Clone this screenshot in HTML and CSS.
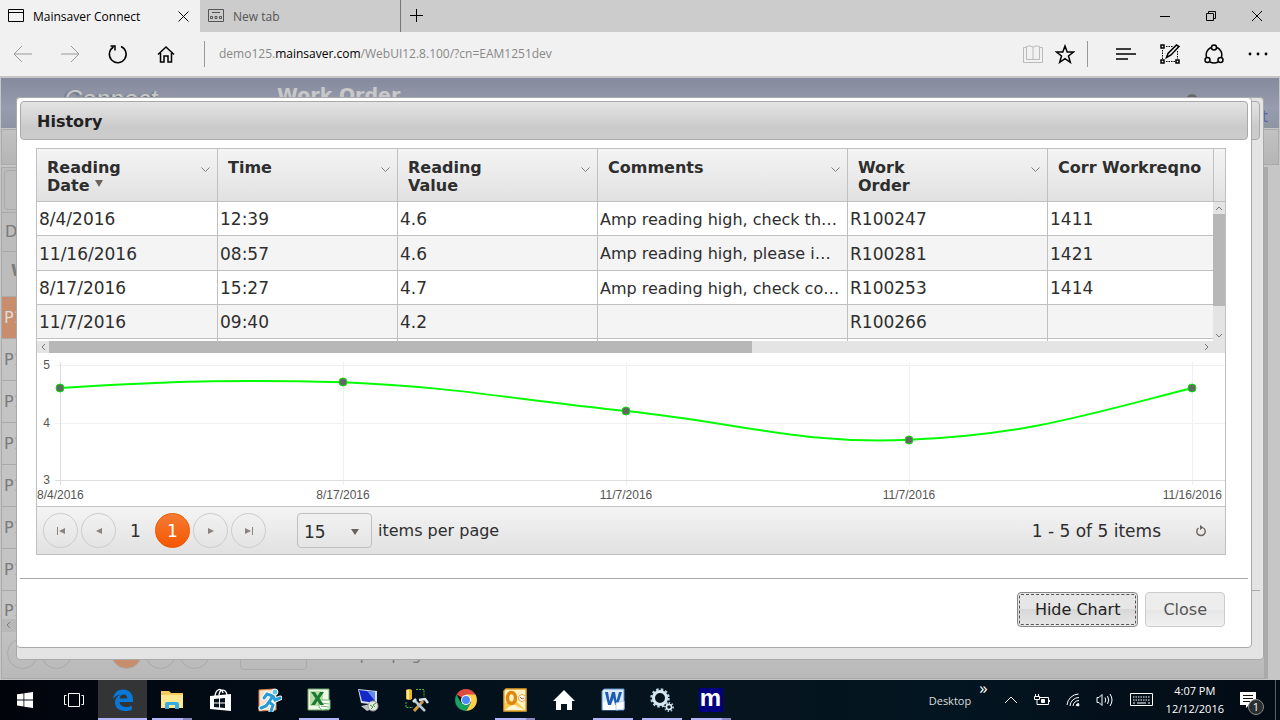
FILE: index.html
```
<!DOCTYPE html>
<html lang="en">
<head>
    <meta charset="UTF-8">
    <meta name="viewport" content="width=device-width, initial-scale=1.0">
    <title>Mainsaver Connect</title>
    <link rel="stylesheet" href="styles.css">
</head>
<body>
    <!-- Browser tabs -->
    <div class="tab-strip">
        <div class="tab active">
            <svg width="16" height="16" viewBox="0 0 16 16"><path d="M.5 1.500h15v12H.5zM.5 4.500h15" class="line"/></svg>
            <span>Mainsaver Connect</span>
            <button class="tab-close" aria-label="Close tab"><svg width="11" height="11" viewBox="0 0 11 11"><path d="M.5.5l10 10M10.500.5l-10 10" class="line"/></svg></button>
        </div>
        <div class="tab">
            <svg width="16" height="16" viewBox="0 0 16 16"><path d="M.5 1.500h15v12H.5zM4 4.500h8M2.500 8.500h2v2h-2zM7 8.500h2v2H7zM11.500 8.500h2v2h-2z" class="line"/></svg>
            <span>New tab</span>
        </div>
        <button class="tab-new" aria-label="New tab"><svg width="14" height="14" viewBox="0 0 14 14"><path d="M0 6.500h13M6.500 0v13" class="line"/></svg></button>
        <div class="window-buttons">
            <button aria-label="Minimize"><svg width="12" height="12" viewBox="0 0 12 12"><path d="M1 6.500h10" class="line"/></svg></button>
            <button aria-label="Restore"><svg width="12" height="12" viewBox="0 0 12 12"><path d="M1.500 3.500h7v7h-7zM3.500 3.500v-2h7v7h-2" class="line"/></svg></button>
            <button aria-label="Close"><svg width="12" height="12" viewBox="0 0 12 12"><path d="M1 1l10 10M11 1L1 11" class="line"/></svg></button>
        </div>
    </div>

    <!-- Address bar -->
    <div class="toolbar">
        <button class="faded" aria-label="Back"><svg width="20" height="18" viewBox="0 0 20 18"><path d="M19 9H1M9 1L1 9l8 8" class="line"/></svg></button>
        <button class="faded" aria-label="Forward"><svg width="20" height="18" viewBox="0 0 20 18"><path d="M1 9h18M11 1l8 8-8 8" class="line"/></svg></button>
        <button aria-label="Refresh"><svg width="20" height="20" viewBox="0 0 20 20"><path d="M13 2.500A8.400 8.400 0 1 1 5.500 3M2.500 2h4.500v4.500" class="line bold"/></svg></button>
        <button aria-label="Home"><svg width="18" height="18" viewBox="0 0 18 18"><path d="M1 9.500L9 2l8 7.500M3.500 8v9H7v-6h4v6h3.500V8" class="line bold"/></svg></button>
        <div class="address">demo125.<b>mainsaver.com</b>/WebUI12.8.100/?cn=EAM1251dev</div>
        <div class="address-icons">
            <svg class="reading" width="20" height="20" viewBox="0 0 20 20"><path d="M3 3.500H.5v15h19v-15H17M10 3v13M10 3Q7 1 3.500 2.500V15.500H10h6.500V2.500Q13 1 10 3" class="line"/></svg>
            <svg width="20" height="20" viewBox="0 0 20 20"><path d="M10 2l2.200 6H18.500l-5 4 1.800 6.300L10 14.600l-5.300 3.700L6.500 12l-5-4h6.300z" class="line bold"/></svg>
        </div>
        <div class="hub-icons">
            <button aria-label="Hub"><svg width="20" height="14" viewBox="0 0 20 14"><path d="M0 2h15M0 7h20M0 12h12" class="line bold"/></svg></button>
            <button aria-label="Web note"><svg width="20" height="20" viewBox="0 0 20 20"><path d="M1 1h3v3H1zM1 16h3v3H1zM16 16h3v3h-3z" class="line bold"/><path d="M6 2.500h7M2.500 6v9M6 17.500h9M17.500 7v8" class="line" stroke-dasharray="1.500 1"/><path d="M6.500 13.500l1.500-4L16.500 1l2.500 1.500-8 8.500z" class="line bold"/></svg></button>
            <button aria-label="Share"><svg width="20" height="20" viewBox="0 0 20 20"><path d="M7 3.500A8 8 0 0 0 2.500 13M13 3.500A8 8 0 0 1 17.500 13M6 18q4 2 8 0" class="line bold"/><circle cx="10" cy="3.500" r="2.500" class="line bold"/><circle cx="3.500" cy="16" r="2.500" class="line bold"/><circle cx="16.500" cy="16" r="2.500" class="line bold"/></svg></button>
            <button aria-label="More"><svg width="20" height="4" viewBox="0 0 20 4"><circle cx="2" cy="2" r="1.400"/><circle cx="10" cy="2" r="1.400"/><circle cx="18" cy="2" r="1.400"/></svg></button>
        </div>
    </div>

    <main class="page">
        <!-- Work order screen under the overlay -->
        <div class="work-order">
            <div class="banner">
                <span class="brand">Connect</span>
                <span class="screen-title">Work Order</span>
                <svg class="user" width="12" height="12" viewBox="0 0 12 12"><circle cx="6" cy="6" r="6"/></svg>
                <a class="logout" href="#">Logout</a>
            </div>
            <div class="menu-bar"></div>
            <div class="wo-grid">
                <div class="wo-tools"><div class="wo-box"></div></div>
                <div class="wo-group">D</div>
                <div class="wo-head">W</div>
                <div class="wo-row selected">P1</div>
                <div class="wo-row">P1</div>
                <div class="wo-row">P1</div>
                <div class="wo-row">P1</div>
                <div class="wo-row">P1</div>
                <div class="wo-row">P1</div>
                <div class="wo-row">P1</div>
                <div class="wo-row short">P1</div>
                <div class="wo-scroll"><svg width="5" height="8" viewBox="0 0 5 8"><path d="M4 1L1 4l3 3" class="line"/></svg></div>
                <div class="wo-pager">
                    <i></i><i></i><i class="current"></i><i></i><i></i>
                    <div class="wo-size"></div>
                    <span>items per page</span>
                </div>
            </div>
        </div>

        <div class="dialog back">
            <div class="dialog-title"></div>
            <div class="dialog-rule"></div>
        </div>

        <!-- History dialog -->
        <section class="dialog front">
            <h1 class="dialog-title">History</h1>
            <div class="dialog-body">
                <div class="grid">
                    <div class="grid-main">
                        <div class="grid-view">
                            <table>
                                <colgroup>
                                    <col class="col-date"><col class="col-time"><col class="col-mid"><col class="col-wide"><col class="col-mid"><col class="col-mid">
                                </colgroup>
                                <thead>
                                    <tr>
                                        <th>Reading Date <svg class="sort" width="8" height="7" viewBox="0 0 8 7"><path d="M0 0h8L4 7z"/></svg><svg class="chev" width="9" height="6" viewBox="0 0 9 6"><path d="M.5.5l4 4 4-4" class="line"/></svg></th>
                                        <th>Time<svg class="chev" width="9" height="6" viewBox="0 0 9 6"><path d="M.5.5l4 4 4-4" class="line"/></svg></th>
                                        <th>Reading Value<svg class="chev" width="9" height="6" viewBox="0 0 9 6"><path d="M.5.5l4 4 4-4" class="line"/></svg></th>
                                        <th>Comments<svg class="chev" width="9" height="6" viewBox="0 0 9 6"><path d="M.5.5l4 4 4-4" class="line"/></svg></th>
                                        <th class="narrow">Work Order<svg class="chev" width="9" height="6" viewBox="0 0 9 6"><path d="M.5.5l4 4 4-4" class="line"/></svg></th>
                                        <th class="nowrap">Corr Workreqno</th>
                                    </tr>
                                </thead>
                                <tbody>
                                    <tr><td>8/4/2016</td><td>12:39</td><td>4.6</td><td class="comment">Amp reading high, check th…</td><td>R100247</td><td>1411</td></tr>
                                    <tr><td>11/16/2016</td><td>08:57</td><td>4.6</td><td class="comment">Amp reading high, please i…</td><td>R100281</td><td>1421</td></tr>
                                    <tr><td>8/17/2016</td><td>15:27</td><td>4.7</td><td class="comment">Amp reading high, check co…</td><td>R100253</td><td>1414</td></tr>
                                    <tr><td>11/7/2016</td><td>09:40</td><td>4.2</td><td></td><td>R100266</td><td></td></tr>
                                    <tr><td></td><td></td><td></td><td></td><td></td><td></td></tr>
                                </tbody>
                            </table>
                        </div>
                        <div class="grid-side">
                            <div class="side-head"></div>
                            <div class="v-scroll">
                                <svg width="8" height="12" viewBox="0 0 8 12"><path d="M1 8l3-3 3 3" class="line"/></svg>
                                <div class="v-thumb"></div>
                                <svg width="8" height="12" viewBox="0 0 8 12"><path d="M1 5l3 3 3-3" class="line"/></svg>
                            </div>
                        </div>
                    </div>
                    <div class="h-scroll">
                        <svg width="12" height="12" viewBox="0 0 12 12"><path d="M8 3L5 6l3 3" class="line"/></svg>
                        <div class="h-track"><div class="h-thumb"></div></div>
                        <svg width="12" height="12" viewBox="0 0 12 12"><path d="M4 3l3 3-3 3" class="line"/></svg>
                    </div>

                    <svg class="chart" viewBox="0 0 1188 153">
                        <path class="gridline" d="M18 12.500h1170M18 70.500h1170M306.500 9v123M589.500 9v123M872.500 9v123M1155.500 9v123"/>
                        <path class="axis" d="M18 127.500h1170M23.500 9v123"/>
                        <path class="series" d="M23 35C136 28 193 26.500 306 29.200C419 33.800 476 46.500 589 58C702 69.500 759 91.400 872 86.800C985 82.200 1042 64 1155 35"/>
                        <g class="dots">
                            <circle cx="23" cy="35" r="4"/><circle cx="306" cy="29" r="4"/><circle cx="589" cy="58" r="4"/><circle cx="872" cy="87" r="4"/><circle cx="1155" cy="35" r="4"/>
                        </g>
                        <g class="labels">
                            <text x="13" y="16" text-anchor="end">5</text>
                            <text x="13" y="74" text-anchor="end">4</text>
                            <text x="13" y="131" text-anchor="end">3</text>
                            <text x="0" y="146">8/4/2016</text>
                            <text x="306" y="146" text-anchor="middle">8/17/2016</text>
                            <text x="589" y="146" text-anchor="middle">11/7/2016</text>
                            <text x="872" y="146" text-anchor="middle">11/7/2016</text>
                            <text x="1185" y="146" text-anchor="end">11/16/2016</text>
                        </g>
                    </svg>

                    <div class="pager">
                        <button aria-label="First page"><svg width="8" height="8" viewBox="0 0 8 8"><path d="M0 0h1v8H0zM8 1v6L2 4z"/></svg></button>
                        <button aria-label="Previous page"><svg width="8" height="8" viewBox="0 0 8 8"><path d="M7 1v6L1 4z"/></svg></button>
                        <span class="page-number">1</span>
                        <button class="current">1</button>
                        <button aria-label="Next page"><svg width="8" height="8" viewBox="0 0 8 8"><path d="M1 1v6l6-3z"/></svg></button>
                        <button aria-label="Last page"><svg width="8" height="8" viewBox="0 0 8 8"><path d="M7 0h1v8H7zM0 1v6l6-3z"/></svg></button>
                        <div class="size-box">
                            <select id="page-size"><option>15</option><option>30</option></select>
                            <svg width="8" height="6" viewBox="0 0 8 6"><path d="M0 0h8L4 6z"/></svg>
                        </div>
                        <label for="page-size">items per page</label>
                        <span class="pager-info">1 - 5 of 5 items</span>
                        <button class="reload" aria-label="Refresh grid"><svg width="12" height="12" viewBox="0 0 12 12"><path d="M3.500 3A4.200 4.200 0 1 0 8.500 3" fill="none" stroke="#6b625d" stroke-width="1.400"/><path d="M5 0v5l3.500-2.500z"/></svg></button>
                    </div>
                </div>
            </div>
            <div class="dialog-footer">
                <button class="btn focused">Hide Chart</button>
                <button class="btn">Close</button>
            </div>
        </section>
    </main>

    <!-- Taskbar -->
    <footer class="taskbar">
        <button class="task" aria-label="Start"><svg width="16" height="16" viewBox="0 0 16 16" fill="#fff"><path d="M0 2.300l6.500-.9v6.100H0zM7.300 1.300L16 0v7.500H7.300zM0 8.400h6.500v6.100L0 13.600zM7.300 8.400H16V16l-8.700-1.300z"/></svg></button>
        <button class="task" aria-label="Task view"><svg width="20" height="16" viewBox="0 0 20 16" class="light"><path d="M4.500 1.500h11v13h-11zM2.500 3.500h-2v9h2M17.500 3.500h2v9h-2"/></svg></button>
        <button class="task open active" aria-label="Edge"><svg width="22" height="24" viewBox="0 0 22 24"><path d="M1 11C2 4.500 6 1.500 11 1.500c6.500 0 10 4.500 10 10V14H7.500c.3 3.500 3.500 5 6.500 5 2.200 0 4-.5 5.800-1.500v4.200C17.800 22.800 15.500 23 13 23 6.500 23 3 19 3 14.500c0-3.500 2-6.500 5.500-8C5.500 7 3 8.500 1 11zM7.600 10.500h7.600c0-2.500-1.300-4-3.600-4s-3.700 1.600-4 4z" fill="#0878d7" fill-rule="evenodd"/></svg></button>
        <button class="task open multi" aria-label="File Explorer"><svg width="24" height="22" viewBox="0 0 24 22"><path d="M1 2h8l2 2h12v15H1z" fill="#f5c95a"/><path d="M1 6h22v13H1z" fill="#fde793"/><path d="M5 20v-5q0-2 2-2h10q2 0 2 2v5h-4v-4H9v4z" fill="#35ade2"/></svg></button>
        <button class="task" aria-label="Store"><svg width="22" height="24" viewBox="0 0 22 24"><path d="M5 8c1-8 7-8 8-3M9 7c1-7 7-6 8 0" fill="none" stroke="#fff" stroke-width="1.400"/><path d="M0 8l21-2v17L0 21z" fill="#fff"/><path d="M4 11l5-.5v4H4zM10 10.400l5-.4v4.500h-5zM4 15.500h5v4l-5-.4zM10 15.500h5V20l-5-.4z" fill="#07111b"/></svg></button>
        <button class="task" aria-label="Run"><svg width="24" height="24" viewBox="0 0 24 24"><path d="M1 2l15-1 2 4v17L1 23z" fill="#f8dfc9" stroke="#d8824d"/><g fill="none" stroke-linecap="round"><path d="M15 8l-4 6 4 3-2 6M11 14l-3 4-5 2M15 8L9 6 6 10M15 8l2 4 5-2" stroke="#fff" stroke-width="5"/><path d="M15 8l-4 6 4 3-2 6M11 14l-3 4-5 2M15 8L9 6 6 10M15 8l2 4 5-2" stroke="#279bd8" stroke-width="3"/></g><circle cx="17" cy="4" r="3" fill="#62c3ef" stroke="#fff"/></svg></button>
        <button class="task open" aria-label="Excel"><svg width="24" height="24" viewBox="0 0 24 24"><path d="M1 1h21v21H1z" fill="#eef7e8" stroke="#68a967"/><path d="M3 3h13v15H3z" fill="#b9dda4"/><path d="M12 12h11v9l-8 1-3-3z" fill="#fff" stroke="#6fb86f"/><path d="M14 15l8 1M14 18l8 1" stroke="#6fb86f"/><path d="M4 4h4l2.500 4L13 4h4l-4.500 6.500L17 17h-4l-2.500-4L8 17H4l4.500-6.500z" fill="#1b7a32"/></svg></button>
        <button class="task" aria-label="Remote desktop"><svg width="24" height="24" viewBox="0 0 24 24"><path d="M2 1l19 2v14L5 15z" fill="#d8dce5"/><path d="M3 2l16 2v11L6 13z" fill="#1428c8"/><path d="M11 3l8 1v9z" fill="#608cf0"/><path d="M5 18l10-2 4 4-8 3z" fill="#bfc4c4"/><circle cx="17" cy="18" r="5" fill="#e4e8df" stroke="#999"/><path d="M14 17l3 2-2 2M20 15l-3 2 2 2" fill="none" stroke="#3b9a42"/></svg></button>
        <button class="task" aria-label="Database tools"><svg width="24" height="24" viewBox="0 0 24 24"><path d="M1 2q3-2 6 0v9q-3 2-6 0z" fill="#efb52d"/><path d="M3 2v9" stroke="#fff0a0" stroke-width="2"/><path d="M11 1.500h8V9M1 14v5.500h7" fill="none" stroke="#52b83c" stroke-dasharray="2 1"/><path d="M9 23l9-10" stroke="#d69a42" stroke-width="3"/><path d="M9 12l11 11" stroke="#b5c7d4" stroke-width="2.500"/><path d="M14 12l6-1 3 4M8 14l3-3" fill="none" stroke="#dce4ea" stroke-width="2.500"/></svg></button>
        <button class="task" aria-label="Chrome"><svg width="22" height="22" viewBox="0 0 22 22"><path d="M11 11L1.500 5.500A11 11 0 0 1 20.500 5.500z" fill="#df4c3f"/><path d="M11 5.500h9.500A11 11 0 0 1 11 22l5-9z" fill="#ffd04c"/><path d="M1.500 5.500L6.200 14l9.300 0L11 22A11 11 0 0 1 1.500 5.500z" fill="#19a15f"/><circle cx="11" cy="11" r="5" fill="#fff"/><circle cx="11" cy="11" r="4" fill="#4c8bf5"/></svg></button>
        <button class="task open multi" aria-label="Outlook"><svg width="24" height="24" viewBox="0 0 24 24"><path d="M3 1h20v22H1V3z" fill="#fff2c3" stroke="#e8a529" stroke-width="1.500"/><path d="M2 15l10-3 10 10H2z" fill="#f9c949"/><path d="M2 22l8-6 12 6z" fill="#fff5d2"/><ellipse cx="8.500" cy="10" rx="4" ry="5.500" fill="none" stroke="#df8710" stroke-width="3.500"/><circle cx="19" cy="10" r="3.500" fill="#fff" stroke="#e5a443"/><path d="M17 9l2 2 2-1" fill="none" stroke="#d45e35"/></svg></button>
        <button class="task" aria-label="Home"><svg width="22" height="22" viewBox="0 0 22 22" fill="#fff"><path d="M11 1l11 11h-3v9h-5v-6H8v6H3v-9H0z"/></svg></button>
        <button class="task open" aria-label="Word"><svg width="24" height="24" viewBox="0 0 24 24"><path d="M3 1h20v21H1V3z" fill="#dceaf8" stroke="#5c92cf"/><path d="M2 14q10-2 20 0v8H2z" fill="#fff"/><path d="M4 4h3l1.500 9L11 4h3l1.500 9L18 4h3l-4 13h-3l-1.500-7-2.500 7H7z" fill="#1c5cb2"/><path d="M15 15l8-2v8l-8 1z" fill="#fff" stroke="#b6d0ed"/></svg></button>
        <button class="task open" aria-label="Services"><svg width="24" height="24" viewBox="0 0 24 24" fill="none"><circle cx="10" cy="10" r="8.500" stroke="#b8d3e2" stroke-width="2.500" stroke-dasharray="2.500 2"/><circle cx="10" cy="10" r="6.500" stroke="#d6e7f0" stroke-width="3"/><circle cx="19" cy="19" r="4" stroke="#a9c6d6" stroke-width="2" stroke-dasharray="1.500 1.500"/><circle cx="19" cy="19" r="2.500" stroke="#e1edf2" stroke-width="1.500"/></svg></button>
        <button class="task open multi" aria-label="Mainsaver"><span class="ms-logo">m</span></button>

        <div class="tray">
            <span class="tray-desktop">Desktop</span>
            <span class="tray-more">»</span>
            <svg width="14" height="8" viewBox="0 0 14 8" class="light"><path d="M1 7l6-6 6 6"/></svg>
            <svg width="16" height="14" viewBox="0 0 16 14" class="light"><path d="M6 4.500h8.500v7H5M15.500 7v2M1.500 1v2M4.500 1v2M.5 3.500h5v3h-5zM3 7v4.500h3"/><path d="M7.500 6.500h3v3h-3z" fill="#fff"/></svg>
            <svg width="14" height="14" viewBox="0 0 14 14" class="light"><path d="M1 12A12 12 0 0 1 12.500 1M4 13a9 9 0 0 1 9-8.500M7 13a6 6 0 0 1 6-5.500M10 13a3 3 0 0 1 3-2.500"/><circle cx="12" cy="12" r="1" fill="#fff"/></svg>
            <svg width="18" height="14" viewBox="0 0 18 14" class="light"><path d="M1 4.500h2l3-3v11l-3-3H1zM9 4.500q1.500 2.500 0 5M11.500 3q2.500 4 0 8M14 1q4 6 0 12"/></svg>
            <svg width="24" height="14" viewBox="0 0 24 14" class="light"><path d="M.5.5h22v12H.5z"/><path d="M3 4h17M3 7h17" stroke-dasharray="1.500 1"/><path d="M3 10h2M7 10h9M18 10h2"/></svg>
            <div class="clock"><span>4:07 PM</span><span>12/12/2016</span></div>
            <div class="notify">
                <svg width="16" height="16" viewBox="0 0 16 16"><path d="M0 0h16v13H9l-3 3v-3H0z" fill="#fff"/><path d="M3 3.500h10M3 6.500h10M3 9.500h7" stroke="#111" fill="none"/></svg>
                <span class="badge">1</span>
            </div>
        </div>
    </footer>
</body>
</html>
```
FILE: styles.css
```
* {
    box-sizing: border-box;
}

body {
    margin: 0;
    height: 100vh;
    min-height: 720px;
    display: flex;
    flex-direction: column;
    overflow: hidden;
    font-family: "DejaVu Sans", Verdana, sans-serif;
    font-size: 16px;
    color: #2e2e2e;
}

button {
    padding: 0;
    border: none;
    background: none;
    font: inherit;
    color: inherit;
    display: flex;
    align-items: center;
    justify-content: center;
}

svg {
    flex: none;
    display: block;
}

.line {
    fill: none;
    stroke: currentColor;
}

.bold {
    stroke-width: 1.5;
}

.light {
    fill: none;
    stroke: #fff;
}

/* Browser window */
.tab-strip {
    display: flex;
    height: 32px;
    flex: none;
    background: #ccc;
    color: #000;
    font-family: "Open Sans", sans-serif;
    font-size: 12px;
}

.tab {
    width: 201px;
    display: flex;
    align-items: center;
    gap: 9px;
    padding: 0 11px 0 8px;
    color: #555;
    border-right: 1px solid #777;
}

.tab.active {
    width: 200px;
    background: #f1f1f1;
    color: #000;
    border-right: none;
}

.tab-close {
    margin-left: auto;
}

.tab-new {
    width: 32px;
}

.window-buttons {
    display: flex;
    margin-left: auto;
}

.window-buttons button {
    width: 46px;
}

.toolbar {
    height: 46px;
    flex: none;
    display: flex;
    align-items: center;
    background: #f1f1f1;
    border-bottom: 2px solid #c5c6c5;
    color: #000;
    font-family: "Open Sans", sans-serif;
    font-size: 12px;
}

.toolbar > button {
    width: 48px;
}

.toolbar > button:first-child {
    width: 46px;
}

.toolbar .faded {
    color: #999;
}

.address {
    flex: 1;
    margin-left: 14px;
    padding-left: 14px;
    line-height: 26px;
    border-left: 1px solid #999;
    color: #888;
}

.address b {
    font-weight: normal;
    color: #000;
}

.address-icons {
    display: flex;
    gap: 12px;
    padding: 3px 12px 3px 0;
    border-right: 1px solid #999;
}

.reading {
    color: #bbb;
}

.hub-icons {
    display: flex;
    padding: 0 0 0 16px;
}

.hub-icons button {
    width: 44px;
}

/* Work order screen, dimmed */
.page {
    position: relative;
    flex: 1;
    overflow: hidden;
    background: #c6c6c6;
}

.work-order {
    height: 100%;
    display: flex;
    flex-direction: column;
    color: #7b7b7b;
}

.banner {
    height: 50px;
    flex: none;
    display: flex;
    align-items: flex-start;
    margin: 0 1px;
    padding: 3px 11px 0 63px;
    background: linear-gradient(#858b9c, #979daf 60%, #8d94a2);
    color: #c8c8c8;
}

.brand {
    width: 213px;
    padding-top: 4px;
    font-family: "Liberation Sans", Arial, sans-serif;
    font-style: italic;
    font-size: 25px;
    line-height: 28px;
    text-shadow: -2px 1px 2px #666d7a;
}

.screen-title {
    font-size: 19px;
    font-weight: bold;
    line-height: 28px;
}

.user {
    margin: 13px 15px 0 auto;
    fill: #68696b;
}

.logout {
    padding-top: 26px;
    font-size: 16px;
    text-decoration: none;
    color: #5c63a8;
}

.menu-bar {
    height: 36px;
    flex: none;
    margin: 1px 1px 2px;
    border: 1px solid #aaa;
    background: linear-gradient(#c2c2c2, #b5b5b5);
}

.wo-grid {
    flex: 1;
    display: flex;
    flex-direction: column;
    margin: 0 12px 4px 1px;
    border: 1px solid #aaa;
    border-right-width: 4px;
    background: #c4c4c4;
    font-size: 16px;
}

.wo-tools {
    height: 45px;
    padding: 2px;
    border-bottom: 1px solid #aaa;
    background: #bcbcbc;
}

.wo-box {
    height: 40px;
    border: 1px solid #aaa;
    border-radius: 4px;
}

.wo-group, .wo-head {
    height: 39px;
    padding-left: 3px;
    line-height: 38px;
    background: #bcbcbc;
    border-bottom: 1px solid #aaa;
}

.wo-head {
    height: 45px;
    padding-left: 9px;
    font-weight: bold;
}

.wo-row {
    height: 42px;
    padding-left: 2px;
    line-height: 42px;
    border-bottom: 1px solid #aaa;
}

.wo-row.selected {
    background: #c78d6d;
    color: #ddd;
}

.wo-row.short {
    height: 28px;
    line-height: 40px;
    border-bottom: none;
}

.wo-scroll {
    height: 13px;
    padding: 2px 4px;
    background: #b8b8b8;
}

.wo-pager {
    flex: 1;
    display: flex;
    align-items: flex-start;
    gap: 3px;
    padding: 6px 5px;
    background: linear-gradient(#c2c2c2, #b9b9b9);
}

.wo-pager i {
    width: 31px;
    height: 31px;
    border: 1px solid #aaa;
    border-radius: 50%;
}

.wo-pager .current {
    margin-left: 36px;
    background: #c78d6d;
}

.wo-size {
    width: 67px;
    height: 32px;
    margin-left: 27px;
    border: 1px solid #aaa;
    border-radius: 4px;
}

.wo-pager span {
    line-height: 34px;
}

/* Dialogs */
.dialog {
    position: absolute;
    top: 19px;
    left: 16px;
    right: 28px;
    padding: 3px;
    border: 1px solid #a9a9a9;
    border-radius: 4px;
    background: #fff;
}

.dialog.back {
    right: 16px;
    height: 563px;
    background: #e4e4e4;
}

.dialog-title {
    height: 39px;
    margin: 0;
    padding-left: 16px;
    border: 1px solid #a9a9a9;
    border-radius: 4px;
    background: linear-gradient(#e4e4e4, #cacaca 70%, #cdcdcd);
    font-size: 16px;
    font-weight: bold;
    line-height: 40px;
    color: #222;
}

.dialog-rule {
    height: 451px;
    border-bottom: 1px solid #a9a9a9;
}

.dialog-body {
    padding: 8px 22px 23px 16px;
}

.grid {
    border: 1px solid #c0c0c0;
}

.grid-main {
    display: flex;
    height: 192px;
}

.grid-view {
    flex: 1;
    min-width: 0;
    overflow: hidden;
}

table {
    width: 1211px;
    table-layout: fixed;
    border-collapse: separate;
    border-spacing: 0;
}

.col-date {
    width: 181px;
}

.col-time {
    width: 180px;
}

.col-mid {
    width: 200px;
}

.col-wide {
    width: 250px;
}

th {
    position: relative;
    height: 53px;
    padding: 10px 60px 0 10px;
    vertical-align: top;
    text-align: left;
    line-height: 18px;
    border-right: 1px solid #c0c0c0;
    border-bottom: 1px solid #c0c0c0;
    background: linear-gradient(#f4f4f4, #e1e1e1);
}

th.narrow {
    padding-right: 100px;
}

th.nowrap {
    white-space: nowrap;
    padding-right: 0;
}

.sort {
    display: inline-block;
    vertical-align: 4px;
    fill: #6b625d;
}

.chev {
    position: absolute;
    top: 18px;
    right: 7px;
    color: #857b78;
}

td {
    height: 34px;
    padding: 1px 2px 0;
    border-right: 1px solid #c0c0c0;
    border-bottom: 1px solid #c0c0c0;
    font-size: 17px;
    white-space: nowrap;
}

td.comment {
    font-size: 16px;
}

tbody tr:nth-child(2) td {
    height: 35px;
}

tbody tr:nth-child(even) {
    background: #f4f4f4;
}

.grid-side {
    width: 12px;
    display: flex;
    flex-direction: column;
    color: #777;
}

.side-head {
    height: 53px;
    border-left: 1px solid #c0c0c0;
    border-bottom: 1px solid #c0c0c0;
    background: linear-gradient(#f4f4f4, #e1e1e1);
}

.v-scroll {
    flex: 1;
    display: flex;
    flex-direction: column;
    align-items: center;
    background: #e4e4e4;
}

.v-thumb {
    width: 12px;
    height: 92px;
    margin-bottom: auto;
    background: #b7b7b7;
}

.h-scroll {
    display: flex;
    padding-right: 12px;
    background: #e4e4e4;
    color: #777;
}

.h-track {
    flex: 1;
}

.h-thumb {
    width: 61%;
    height: 12px;
    background: #b7b7b7;
}

/* Chart */
.chart {
    width: 100%;
    height: auto;
}

.gridline, .axis {
    fill: none;
    stroke: #f0f0f0;
}

.axis {
    stroke: #ddd;
}

.series {
    fill: none;
    stroke: #0f0;
    stroke-width: 2;
}

.dots {
    fill: #666;
    stroke: #00e600;
}

.labels {
    fill: #555;
    font-family: "Liberation Sans", Arial, sans-serif;
    font-size: 12px;
}

/* Pager */
.pager {
    height: 48px;
    display: flex;
    align-items: center;
    gap: 3px;
    padding: 0 12px 0 6px;
    border-top: 1px solid #c0c0c0;
    background: linear-gradient(#f4f4f4, #e1e1e1);
}

.pager button {
    width: 35px;
    height: 35px;
    border: 1px solid #ccc;
    border-radius: 50%;
    font-size: 17px;
    fill: #8c827e;
}

.pager button.current {
    border-color: #e85900;
    background: linear-gradient(#f47b35, #f75700);
    color: #fff;
}

.page-number {
    width: 33px;
    font-size: 17px;
    text-align: center;
}

.size-box {
    position: relative;
    margin: 0 3px 0 28px;
}

.size-box select {
    appearance: none;
    width: 75px;
    height: 35px;
    padding: 2px 6px 0;
    border: 1px solid #bfbfbf;
    border-radius: 4px;
    background: linear-gradient(#f1f1f1, #e5e5e5);
    font: inherit;
    font-size: 17px;
    color: inherit;
}

.size-box svg {
    position: absolute;
    top: 16px;
    right: 13px;
    fill: #6b625d;
    pointer-events: none;
}

.pager-info {
    margin-left: auto;
    font-size: 17px;
}

.pager .reload {
    width: 24px;
    margin-left: 25px;
    border: none;
    fill: #6b625d;
}

.dialog-footer {
    display: flex;
    justify-content: flex-end;
    gap: 7px;
    padding: 13px 23px 17px;
    border-top: 1px solid #a9a9a9;
}

.btn {
    height: 35px;
    padding: 0 17px;
    border: 1px solid #ccc;
    border-radius: 4px;
    background: linear-gradient(#ededed 50%, #e6e6e6 50%, #f1f1f1);
    color: #555;
}

.btn.focused {
    border-color: #888;
    background: linear-gradient(#e6e6e6 50%, #d7d7d7 50%, #e8e8e8);
    color: #222;
    outline: 1px dashed #555;
    outline-offset: -3px;
}

/* Taskbar */
.taskbar {
    height: 40px;
    flex: none;
    display: flex;
    background: linear-gradient(90deg, #02040b, #02101c 30%, #06141e 55%, #031521 75%, #030b14);
    color: #fff;
    font-family: "Open Sans", sans-serif;
    font-size: 11px;
}

.task {
    width: 49px;
    position: relative;
}

.task.active {
    background: #333435;
}

.task.open::after {
    content: "";
    position: absolute;
    left: 5px;
    right: 4px;
    bottom: 0;
    height: 2px;
    background: #b4b4fa;
}

.task.active::after {
    left: 0;
    right: 0;
}

.task.multi::after {
    background: linear-gradient(90deg, #b4b4fa 78%, #8888bd 78%);
}

.ms-logo {
    width: 24px;
    height: 24px;
    background: #000080;
    font-family: "Liberation Sans", Arial, sans-serif;
    font-size: 24px;
    font-weight: bold;
    line-height: 20px;
}

.tray {
    display: flex;
    align-items: center;
    gap: 16px;
    margin-left: auto;
    margin-right: 4px;
    padding-right: 11px;
    border-right: 1px solid #56606a;
}

.tray-desktop {
    color: #ddd;
    margin-right: -8px;
}

.tray-more {
    align-self: flex-start;
    font-size: 17px;
    line-height: 16px;
}

.clock {
    display: flex;
    flex-direction: column;
    align-items: center;
    margin-left: -4px;
    line-height: 18px;
}

.notify {
    position: relative;
    width: 24px;
}

.badge {
    position: absolute;
    top: 7px;
    left: 8px;
    width: 16px;
    height: 16px;
    border: 1px solid #888;
    border-radius: 50%;
    background: #2b2e31;
    font-size: 11px;
    line-height: 14px;
    text-align: center;
}
```
